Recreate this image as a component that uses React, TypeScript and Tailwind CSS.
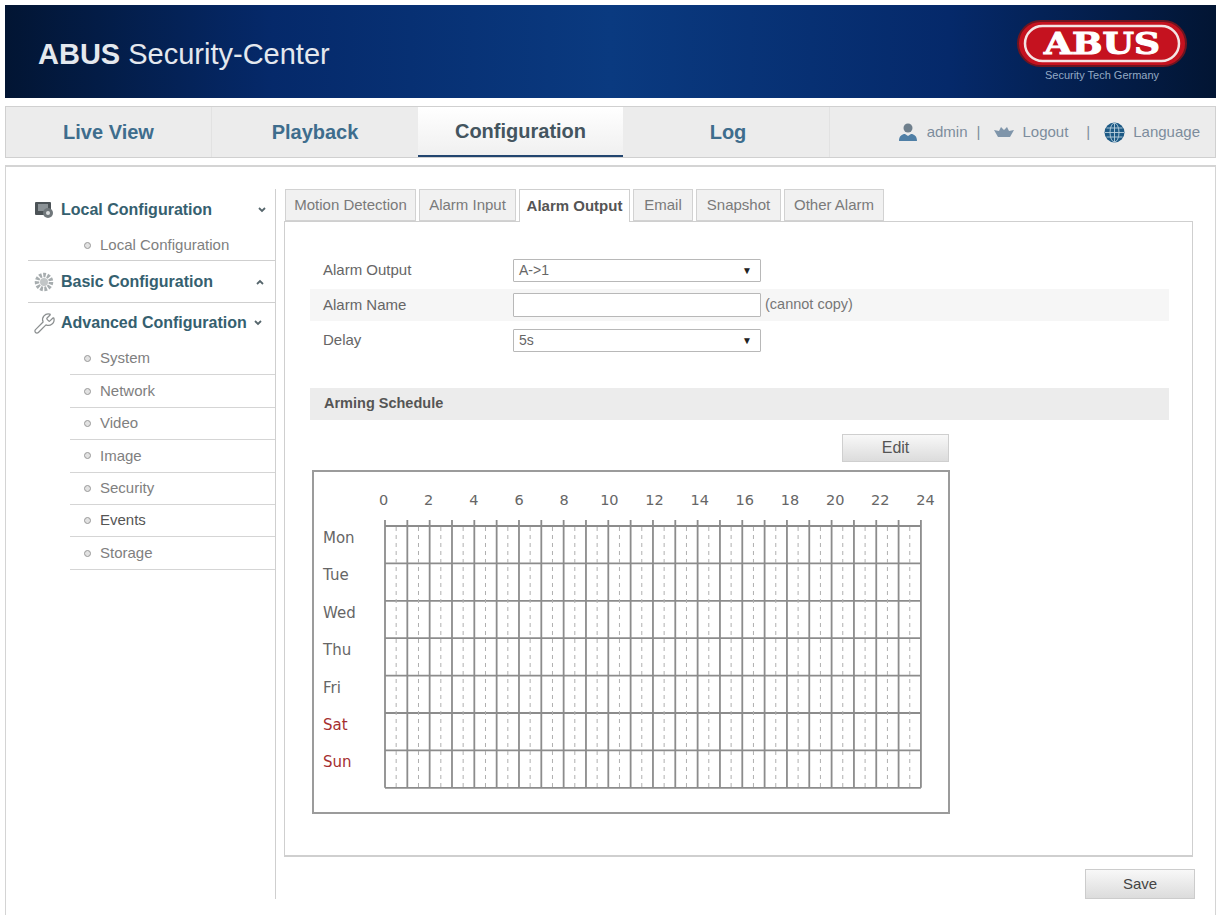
import { Wrench } from "lucide-react";

const tabs = ["Motion Detection", "Alarm Input", "Alarm Output", "Email", "Snapshot", "Other Alarm"];
const tabWidths = [131, 97, 111, 60, 85, 100];
const advanced = ["System", "Network", "Video", "Image", "Security", "Events", "Storage"];
const days = ["Mon", "Tue", "Wed", "Thu", "Fri", "Sat", "Sun"];
const hourLabels = [0, 2, 4, 6, 8, 10, 12, 14, 16, 18, 20, 22, 24];

const HOUR = 22.33;
const ROW = 37.4;

function Logo() {
  return (
    <div className="flex flex-col items-center mr-[29px] mb-[2px]">
      <svg width="170" height="47" viewBox="0 0 170 47">
        <rect x="1" y="1" width="168" height="45" rx="22.5" fill="#c5121f" stroke="#6e1520" strokeWidth="2" />
        <rect x="8" y="6" width="154" height="35" rx="17.5" fill="#c5121f" stroke="#f4e4e4" strokeWidth="2.5" />
        <text x="85" y="34" textAnchor="middle" textLength="116" lengthAdjust="spacingAndGlyphs" fontFamily="'DejaVu Serif', serif" fontWeight="700" fontSize="29" fill="#ffffff" stroke="#ffffff" strokeWidth="1">
          ABUS
        </text>
      </svg>
      <span className="text-[11px] leading-[13px] mt-[2px] text-[#93a9c4] font-['Liberation_Sans',sans-serif]">Security Tech Germany</span>
    </div>
  );
}

function UserIcon() {
  return (
    <svg width="20" height="20" viewBox="0 0 20 20">
      <circle cx="10" cy="6" r="4.5" fill="#6f7f8c" />
      <path d="M1 19c0-5 3-7 6-7l3 2 3-2c3 0 6 2 6 7z" fill="#4f7fa6" />
    </svg>
  );
}

function BoatIcon() {
  return (
    <svg width="20" height="14" viewBox="0 0 20 14">
      <path d="M0 5l5 1 2-4 3 3 3-3 2 4 5-1-4 7H4z" fill="#7f95aa" />
    </svg>
  );
}

function GlobeIcon() {
  return (
    <svg width="21" height="21" viewBox="0 0 21 21" className="ml-[14px]">
      <circle cx="10.5" cy="10.5" r="10" fill="#1d5a85" />
      <g fill="none" stroke="#b9d0de" strokeWidth="0.9">
        <ellipse cx="10.5" cy="10.5" rx="4.5" ry="9.5" />
        <line x1="10.5" y1="1" x2="10.5" y2="20" />
        <line x1="1" y1="10.5" x2="20" y2="10.5" />
        <line x1="2.5" y1="6" x2="18.5" y2="6" />
        <line x1="2.5" y1="15" x2="18.5" y2="15" />
      </g>
    </svg>
  );
}

function LocalIcon() {
  return (
    <svg width="20" height="18" viewBox="0 0 20 18">
      <rect x="1" y="1" width="16" height="13" rx="1" fill="#4c5357" />
      <rect x="4" y="3" width="10" height="7" fill="#8b9296" />
      <circle cx="14" cy="12" r="5" fill="#70777b" />
      <circle cx="14" cy="12" r="2" fill="#d9dcdd" />
    </svg>
  );
}

function GearIcon() {
  return (
    <svg width="20" height="20" viewBox="0 0 20 20">
      <circle cx="10" cy="10" r="7" fill="none" stroke="#a7adaf" strokeWidth="4.5" strokeDasharray="2.6 1.4" />
      <circle cx="10" cy="10" r="4" fill="#c2c6c7" />
    </svg>
  );
}

function Chevron({ up }: { up?: boolean }) {
  return (
    <svg width="8" height="6" viewBox="0 0 8 6">
      <path d={up ? "M1 5l3-3 3 3" : "M1 1l3 3 3-3"} fill="none" stroke="#56666c" strokeWidth="1.8" />
    </svg>
  );
}

function SubItem({ label, dark }: { label: string; dark?: boolean }) {
  return (
    <div className="flex items-center h-[32.4px] ml-[42px] pl-[14px] gap-[9px] border-b border-[#d5d5d5]">
      <span className="w-[7px] h-[7px] rounded-full border border-[#999] bg-[#e2e2e2]" />
      <span className={dark ? "text-[15px] text-[#555]" : "text-[15px] text-[#808080]"}>{label}</span>
    </div>
  );
}

function Sidebar() {
  return (
    <div className="w-[270px] h-[710px] mt-[22px] pl-[22px] border-r border-[#cfcfcf] shrink-0">
      <div className="flex items-center h-[42px] pl-[6px] gap-[7px] text-[16px] font-bold text-[#35606f]">
        <LocalIcon />
        <span>Local Configuration</span>
        <span className="ml-[39px]"><Chevron /></span>
      </div>
      <div className="flex items-center h-[30px] pl-[56px] gap-[9px] border-b border-[#cfcfcf]">
        <span className="w-[7px] h-[7px] rounded-full border border-[#999] bg-[#e2e2e2]" />
        <span className="text-[15px] text-[#808080]">Local Configuration</span>
      </div>
      <div className="flex items-center h-[42px] pl-[6px] gap-[7px] text-[16px] font-bold text-[#35606f] border-b border-[#cfcfcf]">
        <GearIcon />
        <span>Basic Configuration</span>
        <span className="ml-[36px]"><Chevron up /></span>
      </div>
      <div className="flex items-center h-[40px] pl-[5px] gap-[5px] text-[16px] font-bold text-[#35606f]">
        <Wrench size={23} strokeWidth={1.3} className="text-[#8b8f90]" />
        <span>Advanced Configuration</span>
        <span className="ml-[2px]"><Chevron /></span>
      </div>
      {advanced.map((item) => (
        <SubItem key={item} label={item} dark={item === "Events"} />
      ))}
    </div>
  );
}

function SelectBox({ value }: { value: string }) {
  return (
    <div className="flex items-center justify-between w-[248px] h-[23px] pl-[5px] pr-[8px] bg-white border border-[#b8b8b8] rounded-[1px] text-[14px] text-[#666]">
      <span>{value}</span>
      <span className="text-[10px] text-[#222]">▼</span>
    </div>
  );
}

function ScheduleGrid() {
  const width = HOUR * 24;
  const height = ROW * 7;
  const hours = Array.from({ length: 25 }, (_, i) => i);
  const rows = Array.from({ length: 8 }, (_, i) => i);
  return (
    <svg width={width + 2} height={height + 8} className="block">
      {rows.map((r) => (
        <line key={r} x1="1" x2={width + 1} y1={6 + r * ROW} y2={6 + r * ROW} stroke="#8c8c8c" strokeWidth="1.8" />
      ))}
      {hours.map((h) => (
        <line key={h} x1={1 + h * HOUR} x2={1 + h * HOUR} y1="0" y2={height + 6} stroke="#8c8c8c" strokeWidth="1.8" />
      ))}
      {hours.slice(0, 24).map((h) => (
        <line key={h} x1={1 + (h + 0.5) * HOUR} x2={1 + (h + 0.5) * HOUR} y1="7" y2={height + 6} stroke="#b0b0b0" strokeWidth="1" strokeDasharray="4 4" />
      ))}
    </svg>
  );
}

function Schedule() {
  return (
    <div className="w-[638px] h-[344px] ml-[27px] mt-[8px] border-2 border-[#9b9b9b] font-['DejaVu_Sans',sans-serif] text-[15px] text-[#666]">
      <div className="flex ml-[47px] mt-[18px] h-[24px]">
        {hourLabels.map((h) => (
          <span key={h} className="w-[45.2px] text-center text-[14.5px] leading-[20px]">{h}</span>
        ))}
      </div>
      <div className="flex mt-[6px]">
        <div className="w-[70px] pl-[9px] pt-[7px] shrink-0">
          {days.map((d) => (
            <div key={d} className={d === "Sat" || d === "Sun" ? "h-[37.4px] text-[#a52f2f]" : "h-[37.4px]"}>{d}</div>
          ))}
        </div>
        <ScheduleGrid />
      </div>
    </div>
  );
}

function Content() {
  return (
    <div className="flex-1 mt-[22px] pl-[8px]">
      <div className="flex gap-[3px] ml-[1px] h-[33px] relative z-10">
        {tabs.map((t, i) => (
          <div
            key={t}
            style={{ width: tabWidths[i] }}
            className={
              t === "Alarm Output"
                ? "flex items-center justify-center h-[33px] bg-white border border-b-0 border-[#cfcfcf] text-[15px] font-bold text-[#555]"
                : "flex items-center justify-center h-[32px] bg-[#f1f1f1] border border-[#d2d2d2] text-[15px] text-[#7a7a7a]"
            }
          >
            {t}
          </div>
        ))}
      </div>
      <div className="w-[909px] h-[636px] -mt-px border border-[#cfcfcf] border-b-2 font-['Liberation_Sans',sans-serif]">
        <div className="flex flex-col gap-[3px] ml-[25px] w-[859px] pt-[32px] text-[15px] text-[#666]">
          <div className="flex items-center h-[32px]">
            <span className="w-[203px] pl-[13px]">Alarm Output</span>
            <SelectBox value="A->1" />
          </div>
          <div className="flex items-center h-[32px] bg-[#f6f6f6]">
            <span className="w-[203px] pl-[13px]">Alarm Name</span>
            <input className="w-[248px] h-[24px] bg-white border border-[#b8b8b8] rounded-[1px]" />
            <span className="ml-[4px] text-[14.5px] text-[#777]">(cannot copy)</span>
          </div>
          <div className="flex items-center h-[32px]">
            <span className="w-[203px] pl-[13px]">Delay</span>
            <SelectBox value="5s" />
          </div>
        </div>
        <div className="flex items-center w-[859px] h-[32px] ml-[25px] mt-[32px] pl-[14px] bg-[#ececec] text-[14.5px] font-bold text-[#555]">
          Arming Schedule
        </div>
        <div className="flex justify-end w-[664px] mt-[14px]">
          <button className="w-[107px] h-[28px] bg-gradient-to-b from-[#f8f8f8] to-[#dcdcdc] border border-[#cfcfcf] text-[16px] text-[#555]">Edit</button>
        </div>
        <Schedule />
      </div>
      <div className="flex justify-end w-[911px] mt-[12px]">
        <button className="w-[110px] h-[30px] bg-gradient-to-b from-[#f8f8f8] to-[#dcdcdc] border border-[#cccccc] text-[15px] text-[#444]">Save</button>
      </div>
    </div>
  );
}

export default function App() {
  return (
    <div className="w-[1221px] h-[915px] overflow-hidden bg-white pt-[5px] px-[5px] font-['Liberation_Sans',sans-serif]">
      <div className="flex items-center justify-between h-[93px] bg-[linear-gradient(90deg,#021533_0%,#05296a_22%,#0a3a80_50%,#05296a_78%,#021533_100%)]">
        <div className="pl-[33px] pt-[6px] text-[29px] text-[#e4e8ee]">
          <span className="font-bold">ABUS</span> Security-Center
        </div>
        <Logo />
      </div>
      <div className="flex items-center h-[52px] mt-[8px] bg-[#ececec] border-y border-[#d0d0d0] border-x text-[20px] font-bold text-[#3e6d8d]">
        <div className="flex items-center justify-center w-[206px] h-full border-r border-[#e2e2e2]">Live View</div>
        <div className="flex items-center justify-center w-[206px] h-full">Playback</div>
        <div className="flex items-center justify-center w-[205px] h-full text-[#44555f] bg-gradient-to-b from-white to-[#f0f0f0] border-b-2 border-[#22456f]">Configuration</div>
        <div className="flex items-center justify-center w-[207px] h-full pl-[4px] border-r border-[#e2e2e2]">Log</div>
        <div className="flex flex-1 items-center justify-end pr-[15px] text-[15px] font-normal text-[#7d8c9c]">
          <UserIcon />
          <span className="ml-[9px]">admin</span>
          <span className="ml-[9px]">|</span>
          <span className="ml-[14px]"><BoatIcon /></span>
          <span className="ml-[8px]">Logout</span>
          <span className="ml-[18px]">|</span>
          <GlobeIcon />
          <span className="ml-[8px]">Language</span>
        </div>
      </div>
      <div className="flex h-[750px] mt-[7px] border-t-2 border-x border-[#d4d4d4]">
        <Sidebar />
        <Content />
      </div>
    </div>
  );
}
